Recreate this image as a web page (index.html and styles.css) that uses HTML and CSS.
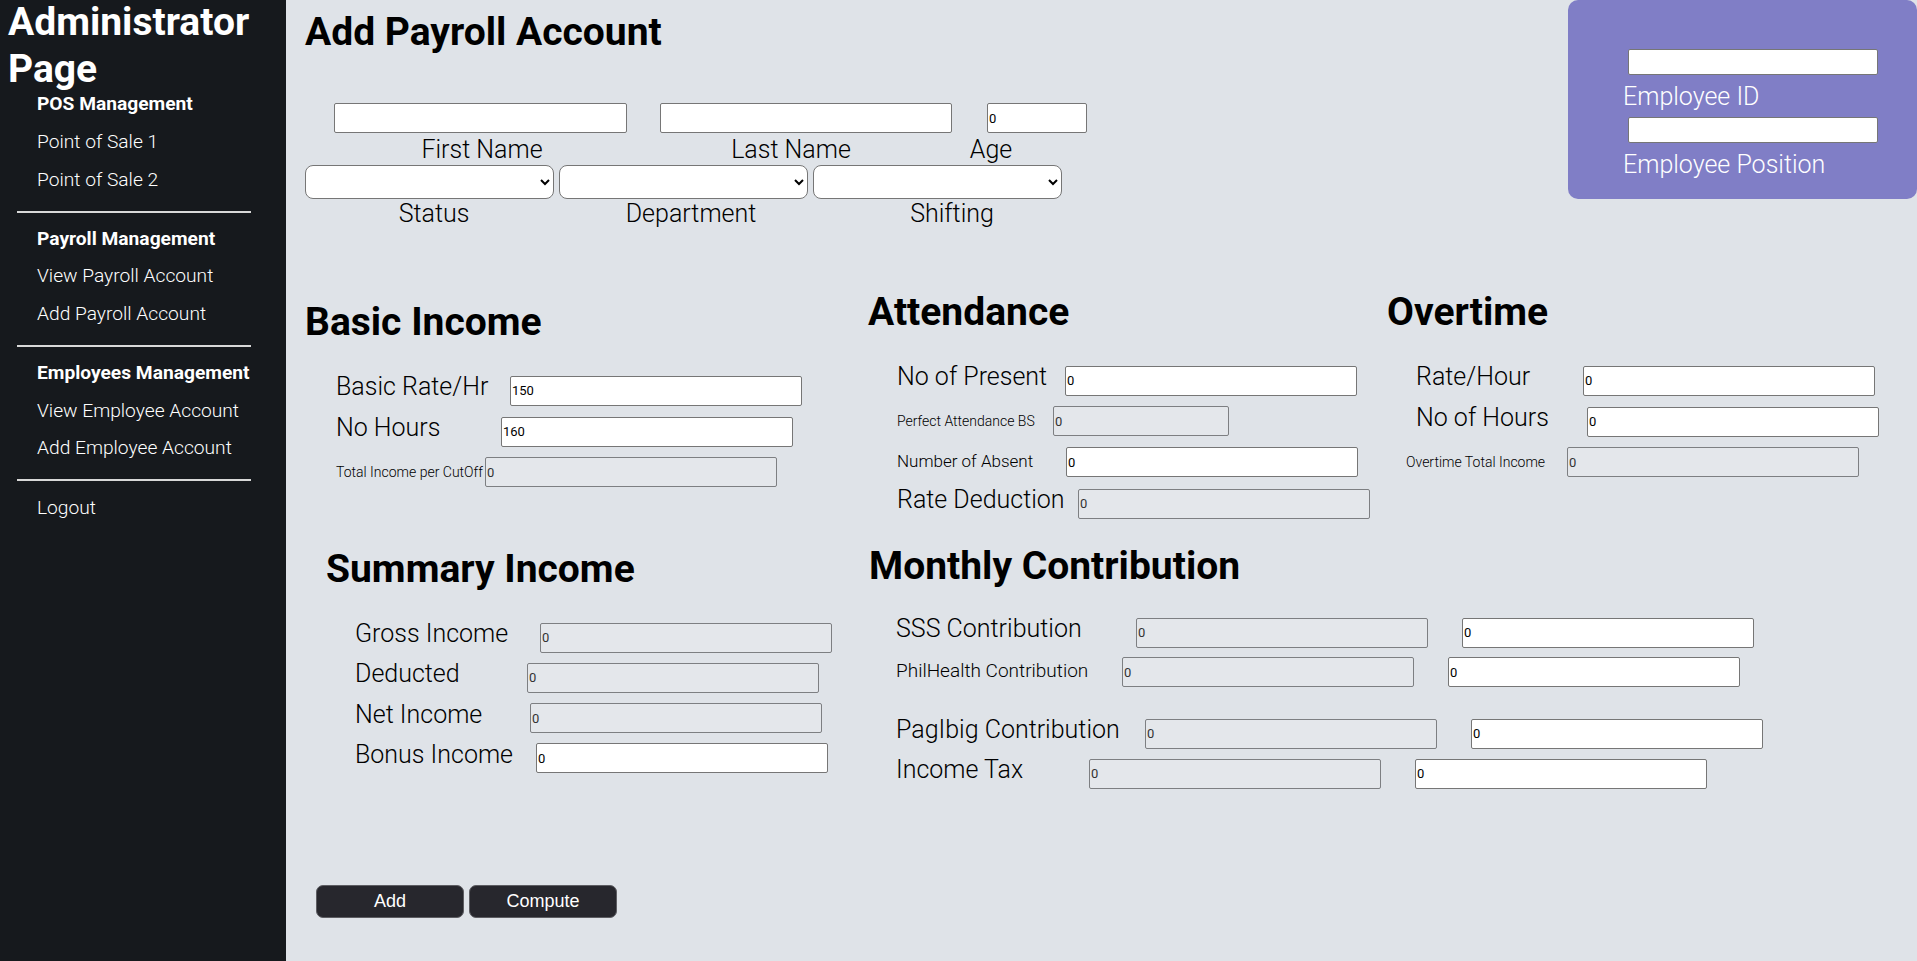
FILE: index.html
```html
<!DOCTYPE html>
<html lang="en">
<head>
<meta charset="utf-8">
<title>Add Payroll Account</title>
<link rel="stylesheet" href="styles.css">
</head>
<body>
<aside class="sidebar">
  <h1 class="brand">Administrator Page</h1>
  <nav class="nav">
    <div class="nav-item nav-head">POS Management</div>
    <a class="nav-item" href="#">Point of Sale 1</a>
    <a class="nav-item" href="#">Point of Sale 2</a>
    <hr class="nav-sep">
    <div class="nav-item nav-head">Payroll Management</div>
    <a class="nav-item" href="#">View Payroll Account</a>
    <a class="nav-item" href="#">Add Payroll Account</a>
    <hr class="nav-sep">
    <div class="nav-item nav-head">Employees Management</div>
    <a class="nav-item" href="#">View Employee Account</a>
    <a class="nav-item" href="#">Add Employee Account</a>
    <hr class="nav-sep">
    <a class="nav-item" href="#">Logout</a>
  </nav>
</aside>

<main class="main">
  <div class="top">
    <div class="top-form">
      <h1 class="page-title">Add Payroll Account</h1>
      <div class="name-row">
        <input class="in in-first" type="text">
        <input class="in in-last" type="text">
        <input class="in in-age" type="text" value="0">
      </div>
      <div class="cap-row">
        <span class="cap-first">First Name</span>
        <span class="cap-last">Last Name</span>
        <span class="cap-age">Age</span>
      </div>
      <div class="select-row">
        <select class="sel"><option></option></select>
        <select class="sel"><option></option></select>
        <select class="sel"><option></option></select>
      </div>
      <div class="cap-row">
        <span class="cap-status">Status</span>
        <span class="cap-dept">Department</span>
        <span class="cap-shift">Shifting</span>
      </div>
    </div>
    <div class="emp-card">
      <input class="in emp-input" type="text">
      <span class="emp-label">Employee ID</span>
      <input class="in emp-input" type="text">
      <span class="emp-label">Employee Position</span>
    </div>
  </div>

  <div class="grid-a">
    <section class="sec sec-basic">
      <h2 class="sec-title">Basic Income</h2>
      <div class="fields fields-basic">
        <div class="row"><span class="lbl w174">Basic Rate/Hr</span><input class="in fld" type="text" value="150"></div>
        <div class="row"><span class="lbl w165">No Hours</span><input class="in fld" type="text" value="160"></div>
        <div class="row"><span class="lbl lbl-s w149">Total Income per CutOff</span><input class="in fld" type="text" value="0" disabled></div>
      </div>
    </section>
    <section class="sec">
      <h2 class="sec-title">Attendance</h2>
      <div class="fields">
        <div class="row"><span class="lbl w168">No of Present</span><input class="in fld" type="text" value="0"></div>
        <div class="row"><span class="lbl lbl-s w156">Perfect Attendance BS</span><input class="in fld fld-short" type="text" value="0" disabled></div>
        <div class="row"><span class="lbl lbl-m w169">Number of Absent</span><input class="in fld" type="text" value="0"></div>
        <div class="row"><span class="lbl w181">Rate Deduction</span><input class="in fld" type="text" value="0" disabled></div>
      </div>
    </section>
    <section class="sec">
      <h2 class="sec-title">Overtime</h2>
      <div class="fields">
        <div class="row"><span class="lbl w167">Rate/Hour</span><input class="in fld" type="text" value="0"></div>
        <div class="row"><span class="lbl w171">No of Hours</span><input class="in fld" type="text" value="0"></div>
        <div class="row row-out"><span class="lbl lbl-s w161">Overtime Total Income</span><input class="in fld" type="text" value="0" disabled></div>
      </div>
    </section>
  </div>

  <div class="grid-b">
    <section class="sec sec-summary">
      <h2 class="sec-title">Summary Income</h2>
      <div class="fields fields-summary">
        <div class="row"><span class="lbl w185">Gross Income</span><input class="in fld" type="text" value="0" disabled></div>
        <div class="row"><span class="lbl w172">Deducted</span><input class="in fld" type="text" value="0" disabled></div>
        <div class="row"><span class="lbl w175">Net Income</span><input class="in fld" type="text" value="0" disabled></div>
        <div class="row"><span class="lbl w181">Bonus Income</span><input class="in fld" type="text" value="0"></div>
      </div>
    </section>
    <section class="sec sec-monthly">
      <h2 class="sec-title">Monthly Contribution</h2>
      <div class="fields fields-monthly">
        <div class="row"><span class="lbl w240">SSS Contribution</span><input class="in fld" type="text" value="0" disabled><input class="in fld fld-pair" type="text" value="0"></div>
        <div class="row row-gap"><span class="lbl lbl-l w226">PhilHealth Contribution</span><input class="in fld" type="text" value="0" disabled><input class="in fld fld-pair" type="text" value="0"></div>
        <div class="row"><span class="lbl w249">PagIbig Contribution</span><input class="in fld" type="text" value="0" disabled><input class="in fld fld-pair" type="text" value="0"></div>
        <div class="row"><span class="lbl w193">Income Tax</span><input class="in fld" type="text" value="0" disabled><input class="in fld fld-pair" type="text" value="0"></div>
      </div>
    </section>
  </div>

  <div class="actions">
    <button class="btn" type="button">Add</button>
    <button class="btn" type="button">Compute</button>
  </div>
</main>
</body>
</html>
```

FILE: styles.css
```css
html, body {
  margin: 0;
  padding: 0;
}

body {
  display: flex;
  min-height: 961px;
  font-family: Roboto, "Noto Sans", sans-serif;
  background: #dfe3e8;
  color: #000;
}

/* ---------- Sidebar ---------- */
.sidebar {
  width: 286px;
  flex: none;
  background: #16191d;
  color: #fff;
}

.brand {
  margin: -1px 0 0;
  padding-left: 8px;
  font-size: 39px;
  line-height: 46.7px;
  font-weight: 700;
}

.nav {
  margin-top: -7px;
}

.nav-item {
  display: block;
  padding-left: 37px;
  font-size: 19.2px;
  line-height: 37.75px;
  font-weight: 300;
  color: #fff;
  text-decoration: none;
}

.nav-head {
  font-weight: 700;
}

.nav-sep {
  width: 234px;
  height: 2px;
  margin: 12px 0 7px 17px;
  border: 0;
  background: #d8d8d8;
}

.nav-sep:last-of-type {
  margin-bottom: 8px;
}

/* ---------- Main ---------- */
.main {
  flex: 1;
  padding-left: 19px;
}

.top {
  display: flex;
  justify-content: space-between;
  height: 228px;
}

.page-title {
  margin: 10px 0 0;
  font-size: 39px;
  line-height: 44px;
  font-weight: 700;
}

.in {
  box-sizing: border-box;
  height: 30px;
  margin: 0;
  padding: 0 1px;
  border: 1px solid #767676;
  border-radius: 2px;
  background: #fff;
  font-family: Roboto, sans-serif;
  font-size: 13px;
  color: #000;
}

.in:disabled {
  background: #e4e7eb;
  border-color: #7d7f82;
  color: #333;
}

.name-row {
  display: flex;
  margin-top: 49px;
}

.in-first { margin-left: 29px; width: 293px; }
.in-last  { margin-left: 33px; width: 292px; }
.in-age   { margin-left: 35px; width: 100px; }

.cap-row {
  display: flex;
  margin-top: 3px;
  font-size: 25px;
  line-height: 28px;
  font-weight: 300;
}

.cap-row span {
  text-align: center;
}

.select-row + .cap-row {
  margin-top: 1px;
}

.cap-first  { width: 354px; }
.cap-last   { width: 264px; }
.cap-age    { width: 136px; }
.cap-status { width: 258px; }
.cap-dept   { width: 256px; }
.cap-shift  { width: 266px; }

.select-row {
  display: flex;
  gap: 5px;
  margin-top: 1px;
}

.sel {
  width: 249px;
  height: 34px;
  border: 1px solid #767676;
  border-radius: 8px;
  background: #fff;
  font-family: Roboto, sans-serif;
  font-size: 13px;
}

/* Employee card */
.emp-card {
  box-sizing: border-box;
  width: 349px;
  height: 199px;
  padding: 49px 0 0 55px;
  border-radius: 10px;
  background: #807ec6;
  color: #fff;
}

.emp-input {
  display: block;
  width: 250px;
  height: 26px;
  margin-left: 5px;
}

.emp-label {
  display: block;
  margin: 8px 0 6px;
  font-size: 25px;
  line-height: 28px;
  font-weight: 300;
}

/* ---------- Sections ---------- */
.grid-a {
  display: grid;
  grid-template-columns: 563px 519px 1fr;
  margin-top: 62px;
}

.grid-b {
  display: grid;
  grid-template-columns: 563px 1fr;
  margin-top: 15px;
}

.sec-title {
  margin: 0;
  font-size: 39px;
  line-height: 44px;
  font-weight: 700;
}

.sec-basic { padding-top: 10px; }
.sec-summary { padding: 3px 0 0 21px; }
.sec-monthly { padding-left: 1px; }

.fields {
  margin-top: 31px;
  padding-left: 29px;
}

.fields-basic { padding-left: 31px; }
.fields-monthly { margin-top: 29px; padding-left: 27px; }

.row {
  display: flex;
  align-items: baseline;
  height: 30px;
  margin-bottom: 11px;
}

.fields-summary .row { margin-bottom: 10.3px; }
.fields-monthly .row { margin-bottom: 10px; }
.fields-monthly .row-gap { margin-bottom: 31px; }

.lbl {
  flex: none;
  font-size: 25px;
  line-height: 24px;
  font-weight: 300;
  white-space: nowrap;
}

.lbl-s { font-size: 14px; line-height: 14px; }
.lbl-m { font-size: 17px; line-height: 17px; }
.lbl-l { font-size: 19px; line-height: 19px; }

.row-out .lbl { margin-left: -10px; }

.w149 { width: 149px; }
.w156 { width: 156px; }
.w161 { width: 161px; }
.w165 { width: 165px; }
.w167 { width: 167px; }
.w168 { width: 168px; }
.w169 { width: 169px; }
.w171 { width: 171px; }
.w172 { width: 172px; }
.w174 { width: 174px; }
.w175 { width: 175px; }
.w181 { width: 181px; }
.w185 { width: 185px; }
.w193 { width: 193px; }
.w226 { width: 226px; }
.w240 { width: 240px; }
.w249 { width: 249px; }

.fld { width: 292px; flex: none; }
.fld-short { width: 176px; }
.fld-pair { margin-left: 34px; }

/* ---------- Actions ---------- */
.actions {
  display: flex;
  gap: 5px;
  margin-top: 87px;
  padding-left: 11px;
}

.btn {
  width: 148px;
  height: 33px;
  border: 1px solid #5d5d62;
  border-radius: 7px;
  background: #27272d;
  color: #fff;
  font-family: "Liberation Sans", Arial, sans-serif;
  font-size: 18px;
}
```
